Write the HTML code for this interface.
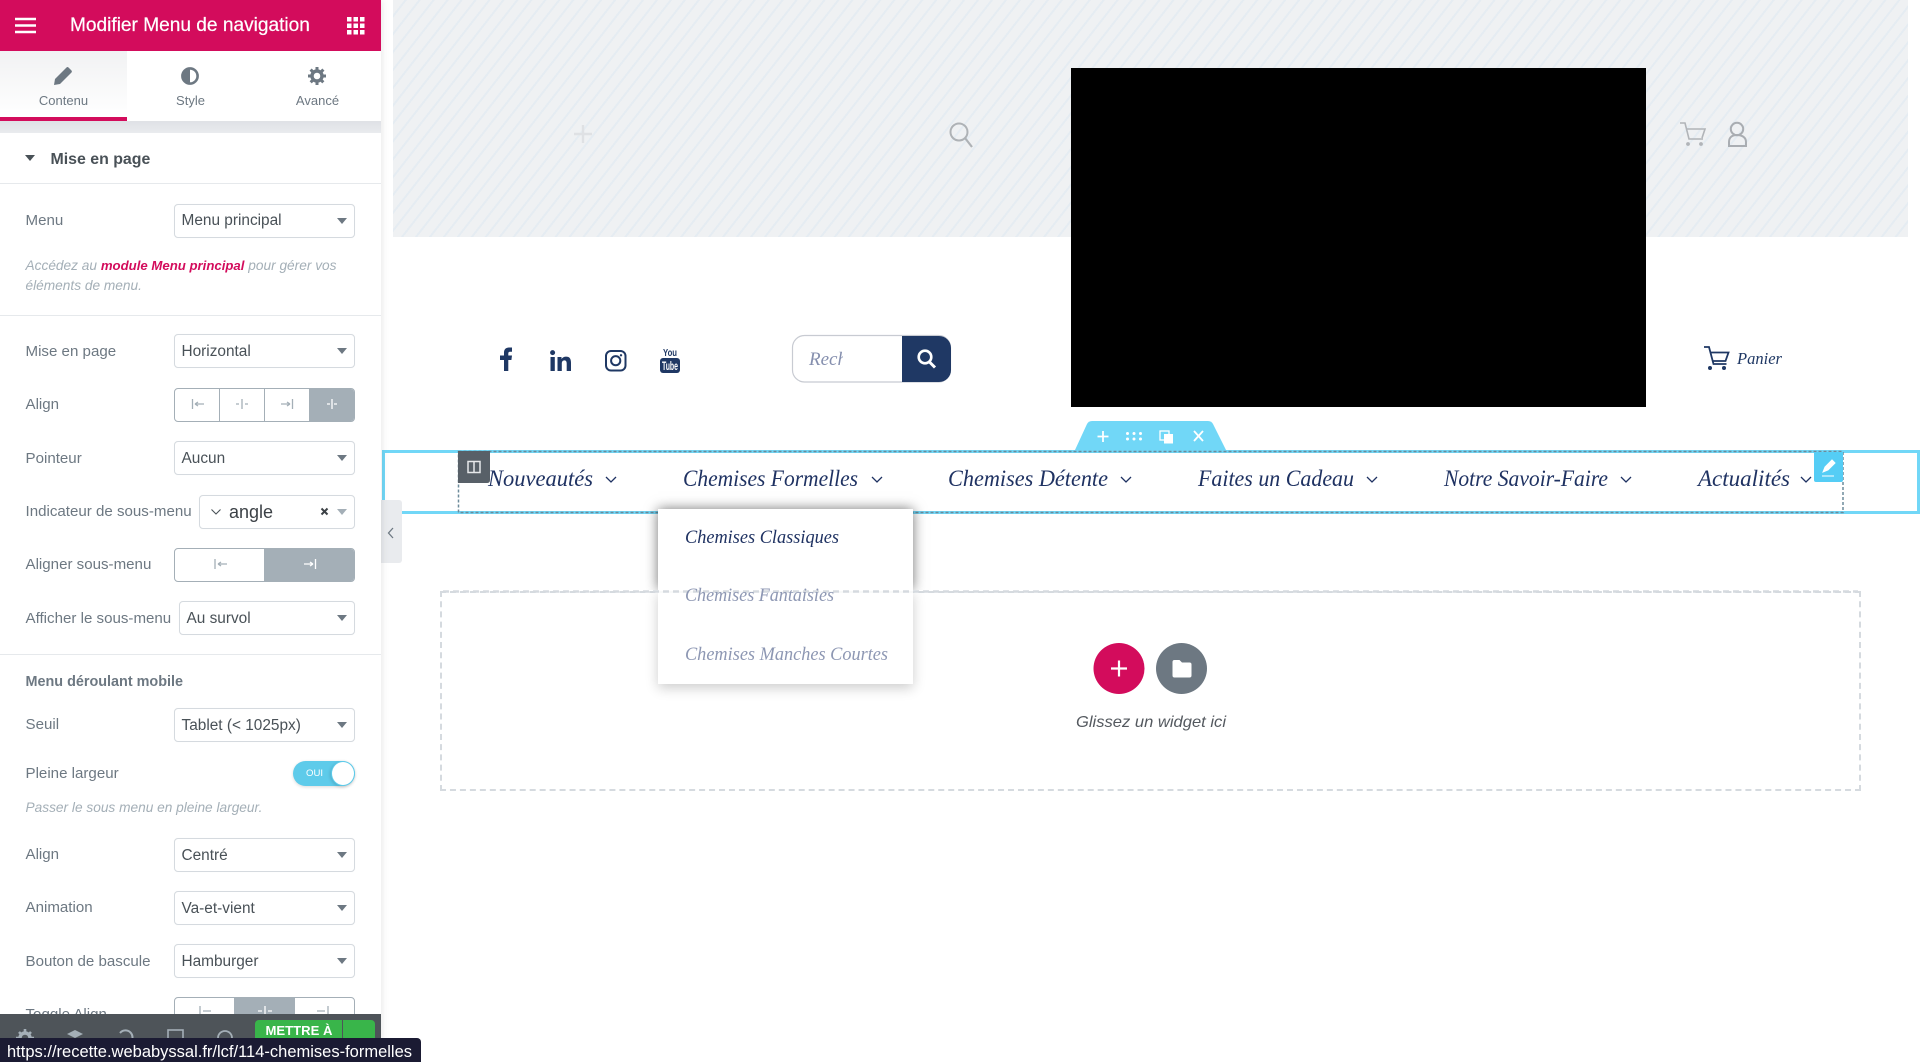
<!DOCTYPE html>
<html lang="fr"><head><meta charset="utf-8"><title>Modifier Menu de navigation</title>
<style>
*{box-sizing:border-box}
html,body{margin:0;padding:0;width:1920px;height:1062px;overflow:hidden;background:#fff;font-family:"Liberation Sans",sans-serif}
.a{position:absolute}
.t{position:absolute;white-space:nowrap;line-height:20px;height:20px}
#panel{position:absolute;left:0;top:0;width:381px;height:1062px;background:#fff;box-shadow:0 0 8px rgba(0,0,0,.12);overflow:hidden;z-index:5}
.lab{font-size:15.1px;color:#6d7882;left:25.5px;margin-top:1px}
.sel{position:absolute;left:174px;width:181px;height:34px;border:1px solid #d5dadf;border-radius:4px;background:#fff;box-shadow:0 0 1px rgba(0,0,0,.05)}
.sel span{position:absolute;left:6.5px;top:6.5px;font-size:15.4px;line-height:20px;color:#495157;white-space:nowrap}
.sel i{position:absolute;right:7px;top:13px;width:0;height:0;border-left:5px solid transparent;border-right:5px solid transparent;border-top:6px solid #6d7882}
.grp{position:absolute;left:174px;width:181px;height:34px;border:1.5px solid #a4afb7;border-radius:4px;background:#fff;overflow:hidden}
.grp b{position:absolute;top:0;bottom:0;background:#a4afb7}
.grp u{position:absolute;top:0;bottom:0;width:1px;background:#a4afb7}
.sep{position:absolute;left:0;width:381px;height:1px;background:#e6e9ec}
svg{display:block}
</style></head><body>

<!-- Preview -->
<div class="a" style="left:393px;top:0;width:1515px;height:237px;background-color:#eff1f3;background-image:repeating-linear-gradient(128deg,#eff1f3 0,#eff1f3 9px,#e5ecf2 9px,#e5ecf2 11px)"></div>
<div class="a" style="left:1071px;top:68px;width:575px;height:339px;background:#000"></div>

<svg class="a" style="left:0;top:0" width="1920" height="1062" viewBox="0 0 1920 1062">
  <!-- placeholder icons -->
  <path d="M583 125v18M574 134h18" stroke="#dfe1e4" stroke-width="2.4" fill="none"/>
  <circle cx="959" cy="132" r="8.5" fill="none" stroke="#aeb2b6" stroke-width="2"/>
  <path d="M965 138l7 9" stroke="#aeb2b6" stroke-width="2.2"/>
  <path d="M1680 123h5l4 16h14M1687 129h18l-3 9" fill="none" stroke="#b1b4b8" stroke-width="1.6"/>
  <circle cx="1688" cy="144" r="1.9" fill="#b1b4b8"/><circle cx="1701" cy="144" r="1.9" fill="#b1b4b8"/>
  <circle cx="1737" cy="129" r="6.2" fill="none" stroke="#a9adb2" stroke-width="2"/>
  <path d="M1729 146v-4c0-5 3.500-7 8-7s9 2 9 7v4z" fill="none" stroke="#a9adb2" stroke-width="2"/>

  <!-- social -->
  <path d="M504 371v-11h-4v-4.500h4v-3c0-3.200 2-5 5-5h3v4.300h-2c-1.300 0-1.700.7-1.700 1.800v1.900h3.700l-.6 4.500h-3.100v11z" fill="#1f3864"/>
  <g transform="translate(-1 0)">
  <circle cx="553.600" cy="352.600" r="2.500" fill="#1f3864"/>
  <path d="M551.500 357h4.300v14h-4.300zM558.500 357h4v2c1-1.500 2.600-2.400 4.600-2.400 3.600 0 4.900 2.300 4.900 6.200v8.200h-4.300v-7.400c0-1.900-.6-3.200-2.300-3.200-1.900 0-2.600 1.400-2.600 3.300v7.300h-4.300z" fill="#1f3864"/>
  </g>
  <rect x="606" y="351" width="19.500" height="19.500" rx="5" fill="none" stroke="#1f3864" stroke-width="2"/>
  <circle cx="615.700" cy="360.700" r="4.600" fill="none" stroke="#1f3864" stroke-width="2"/>
  <circle cx="621" cy="355.300" r="1.200" fill="#1f3864"/>
  <text x="663" y="356" font-family="Liberation Sans" font-size="10" font-weight="700" fill="#1f3864" textLength="14" lengthAdjust="spacingAndGlyphs">You</text>
  <rect x="660" y="358" width="20" height="15" rx="3" fill="#1f3864"/>
  <text x="662" y="370" font-family="Liberation Sans" font-size="12" font-weight="700" fill="#fff" textLength="16" lengthAdjust="spacingAndGlyphs">Tube</text>

  <!-- search -->
  <rect x="792.500" y="335.500" width="158" height="46.500" rx="12" fill="#fff" stroke="#c8cbd2" stroke-width="1.200"/>
  <path d="M902 336h37a12 12 0 0 1 12 12v22a12 12 0 0 1-12 12h-37z" fill="#1f3864"/>
  <circle cx="925" cy="357" r="6.300" fill="none" stroke="#fff" stroke-width="2.600"/>
  <path d="M929.500 362l5.500 5.500" stroke="#fff" stroke-width="3"/>
  <clipPath id="rc"><rect x="805" y="340" width="38" height="40"/></clipPath>
  <text clip-path="url(#rc)" x="809" y="365" font-family="Liberation Serif" font-style="italic" font-size="19" fill="#858fae">Rechercher</text>

  <!-- panier -->
  <path d="M1704 347h5l4.500 17h13M1710.500 352.500h18l-3 8.500h-13" fill="none" stroke="#1f3864" stroke-width="1.800"/>
  <circle cx="1710" cy="368" r="2" fill="#1f3864"/><circle cx="1724" cy="368" r="2" fill="#1f3864"/>
  <text x="1737" y="364" font-family="Liberation Serif" font-style="italic" font-size="17" fill="#1f3864" textLength="45" lengthAdjust="spacingAndGlyphs">Panier</text>

  <!-- section outline -->
  <rect x="383.500" y="451.500" width="1535" height="61" fill="#fff" stroke="#71d7f7" stroke-width="3"/>
  <!-- toolbar -->
  <path d="M1075 450L1087 424q1.500-3 5-3h116q3.500 0 5 3l13 26z" fill="#71d7f7"/>
  <path d="M1103 431v11M1097.500 436.500h11M1194 431l9 10M1203 431l-9 10" stroke="#fff" stroke-width="1.800" fill="none"/>
  <g fill="#fff"><circle cx="1127.500" cy="433.500" r="1.500"/><circle cx="1134" cy="433.500" r="1.500"/><circle cx="1140.500" cy="433.500" r="1.500"/><circle cx="1127.500" cy="439" r="1.500"/><circle cx="1134" cy="439" r="1.500"/><circle cx="1140.500" cy="439" r="1.500"/></g>
  <rect x="1160" y="431" width="9" height="9" fill="none" stroke="#fff" stroke-width="1.300"/>
  <rect x="1164" y="434" width="9" height="9.500" fill="#fff"/>
  <!-- dashed column -->
  <rect x="458.500" y="451.500" width="1384.500" height="61" fill="none" stroke="#6d8b9b" stroke-width="1.500" stroke-dasharray="3 2"/>

  <!-- nav text -->
  <g font-family="Liberation Serif" font-style="italic" font-size="23" fill="#1f3262">
    <text x="488" y="486" textLength="105" lengthAdjust="spacingAndGlyphs">Nouveautés</text>
    <text x="683" y="486" textLength="175" lengthAdjust="spacingAndGlyphs">Chemises Formelles</text>
    <text x="948" y="486" textLength="160" lengthAdjust="spacingAndGlyphs">Chemises Détente</text>
    <text x="1198" y="486" textLength="156" lengthAdjust="spacingAndGlyphs">Faites un Cadeau</text>
    <text x="1444" y="486" textLength="164" lengthAdjust="spacingAndGlyphs">Notre Savoir-Faire</text>
    <text x="1698" y="486" textLength="92" lengthAdjust="spacingAndGlyphs">Actualités</text>
  </g>
  <g fill="none" stroke="#1f3262" stroke-width="1.300">
    <path d="M606 477l5 5 5-5M872 477l5 5 5-5M1121 477l5 5 5-5M1367 477l5 5 5-5M1621 477l5 5 5-5M1801 477l5 5 5-5"/>
  </g>
  <!-- handle -->
  <path d="M458 451h32v29q0 3-3 3h-29z" fill="#586068"/>
  <rect x="468" y="461.500" width="12" height="11" fill="none" stroke="#e6e8ea" stroke-width="1.500"/>
  <path d="M474 461v12" stroke="#e6e8ea" stroke-width="1.500"/>
  <!-- edit -->
  <path d="M1814 452h29v28q0 2-2 2h-25q-2 0-2-2z" fill="#55cdf5"/>
  <path d="M1823 472l2-5 7-7 3 3-7 7zM1822 476h12" fill="#fff" stroke="#fff" stroke-width="1"/>
</svg>

<!-- Dropzone -->
<div class="a" style="left:440px;top:591px;width:1421px;height:200px;border:2.500px dashed #d5dadf"></div>

<!-- dropdown -->
<div class="a" style="left:658px;top:590px;width:255px;height:94px;background:rgba(255,255,255,.82);box-shadow:0 4px 12px rgba(0,0,0,.2);clip-path:inset(0 -20px -20px -20px)"></div>
<div class="a" style="left:658px;top:509px;width:255px;height:81px;background:#fff;box-shadow:0 0 12px rgba(0,0,0,.55);clip-path:inset(-20px -20px 0 -20px)"></div>
<svg class="a" style="left:0;top:0" width="1920" height="1062" viewBox="0 0 1920 1062">
  <path d="M443 591.500H1858" stroke="#d5dadf" stroke-width="2.500" stroke-dasharray="6 4"/>
  <g font-family="Liberation Serif" font-style="italic" font-size="19">
    <text x="685" y="543" fill="#1f3262" textLength="154" lengthAdjust="spacingAndGlyphs">Chemises Classiques</text>
    <text x="685" y="601" fill="#8d97b3" textLength="149" lengthAdjust="spacingAndGlyphs">Chemises Fantaisies</text>
    <text x="685" y="660" fill="#8d97b3" textLength="203" lengthAdjust="spacingAndGlyphs">Chemises Manches Courtes</text>
  </g>
  <circle cx="1119" cy="668.500" r="25.500" fill="#d30c5c"/>
  <path d="M1119 660.500v16M1111 668.500h16" stroke="#fff" stroke-width="2.200"/>
  <circle cx="1181.500" cy="668.500" r="25.500" fill="#6d7882"/>
  <path d="M1172.500 662q0-2 2-2h5l2.500 2.500h7.500q2 0 2 2v11q0 2-2 2h-15q-2 0-2-2z" fill="#fff"/>
  <text x="1076" y="727" font-family="Liberation Sans" font-style="italic" font-size="16" fill="#54595f" textLength="150" lengthAdjust="spacingAndGlyphs">Glissez un widget ici</text>
</svg>

<!-- collapse tab -->
<div class="a" style="left:381px;top:500px;width:21px;height:63px;background:#e9ebee;border-radius:0 3px 3px 0;z-index:4"></div>
<svg class="a" style="left:385px;top:525px;z-index:4" width="12" height="16"><path d="M8 3L3.500 8 8 13" fill="none" stroke="#6d7882" stroke-width="1.300"/></svg>

<!-- Panel -->
<div id="panel">
  <div class="a" style="left:0;top:0;width:381px;height:51px;background:#d30c5c"></div>
  <svg class="a" style="left:15px;top:17px" width="22" height="17"><path d="M0 2h21M0 8.500h21M0 15h21" stroke="#fff" stroke-width="2.600"/></svg>
  <div class="t" style="left:70px;top:16px;font-size:19.1px;color:#fff;-webkit-text-stroke:.2px #fff">Modifier Menu de navigation</div>
  <svg class="a" style="left:347px;top:17px" width="18" height="18" fill="#fff"><rect x="0" y="0" width="4.500" height="4.500"/><rect x="6.500" y="0" width="4.500" height="4.500"/><rect x="13" y="0" width="4.500" height="4.500"/><rect x="0" y="6.500" width="4.500" height="4.500"/><rect x="6.500" y="6.500" width="4.500" height="4.500"/><rect x="13" y="6.500" width="4.500" height="4.500"/><rect x="0" y="13" width="4.500" height="4.500"/><rect x="6.500" y="13" width="4.500" height="4.500"/><rect x="13" y="13" width="4.500" height="4.500"/></svg>

  <!-- tabs -->
  <div class="a" style="left:0;top:51px;width:127px;height:70px;background:linear-gradient(#f1f2f3,#fff);border-bottom:4px solid #d30c5c"></div>
  <svg class="a" style="left:52px;top:65px" width="22" height="22"><path d="M2 20l1-6L14.500 2.500a1.500 1.500 0 0 1 2 0l3 3a1.500 1.500 0 0 1 0 2L8 19z" fill="#6d7882"/></svg>
  <div class="t" style="left:0;width:127px;text-align:center;top:91px;font-size:13px;color:#6d7882">Contenu</div>
  <svg class="a" style="left:181px;top:67px" width="18" height="18"><circle cx="9" cy="9" r="7.600" fill="#fff" stroke="#6d7882" stroke-width="2.600"/><path d="M9 1.500a7.500 7.500 0 0 0 0 15z" fill="#6d7882"/></svg>
  <div class="t" style="left:127px;width:127px;text-align:center;top:91px;font-size:13px;color:#6d7882">Style</div>
  <svg class="a" style="left:308px;top:67px" width="18" height="18"><circle cx="9" cy="9" r="5" fill="none" stroke="#6d7882" stroke-width="3.400"/><path d="M9 0v18M0 9h18M2.600 2.600l12.800 12.800M15.400 2.600L2.600 15.400" stroke="#6d7882" stroke-width="3" stroke-dasharray="3 12"/></svg>
  <div class="t" style="left:254px;width:127px;text-align:center;top:91px;font-size:13px;color:#6d7882">Avancé</div>
  <div class="a" style="left:0;top:121px;width:381px;height:12px;background:linear-gradient(#dfe1e6,#e9ebee)"></div>

  <!-- section -->
  <div class="a" style="left:25px;top:155px;width:0;height:0;border-left:5px solid transparent;border-right:5px solid transparent;border-top:6px solid #495157"></div>
  <div class="t" style="left:50.5px;top:149.5px;font-size:15.9px;font-weight:700;color:#495157">Mise en page</div>
  <div class="sep" style="top:183px"></div>

  <div class="t lab" style="top:210px">Menu</div>
  <div class="sel" style="top:203.5px"><span>Menu principal</span><i></i></div>
  <div class="t" style="left:25.5px;top:256px;font-size:13.7px;font-style:italic;color:#a4afb7">Accédez au <b style="color:#d30c5c;font-size:13.2px">module Menu principal</b> pour gérer vos</div>
  <div class="t" style="left:25.5px;top:276px;font-size:13.7px;font-style:italic;color:#a4afb7">éléments de menu.</div>
  <div class="sep" style="top:315px"></div>

  <div class="t lab" style="top:341px">Mise en page</div>
  <div class="sel" style="top:334px"><span>Horizontal</span><i></i></div>

  <div class="t lab" style="top:394px">Align</div>
  <div class="grp" style="top:387.5px"><u style="left:44px"></u><u style="left:89px"></u><b style="left:134px;right:0"></b></div>
  <svg class="a" style="left:174px;top:387px" width="181" height="34" fill="none" stroke-width="1.300">
    <g stroke="#a4afb7"><path d="M18.500 12v10M21 17h9M21 17l3-2M21 17l3 2"/><path d="M68 12v10M62 17h3M71 17h3"/><path d="M118.500 12v10M107 17h9M116 17l-3-2M116 17l-3 2"/></g>
    <g stroke="#fff"><path d="M158 12v10M153 17h3M160 17h3"/></g>
  </svg>

  <div class="t lab" style="top:448px">Pointeur</div>
  <div class="sel" style="top:441px"><span>Aucun</span><i></i></div>

  <div class="t lab" style="top:501px">Indicateur de sous-menu</div>
  <div class="sel" style="top:494.5px;left:199px;width:156px"><i style="border-top-color:#a4afb7;top:13px"></i></div>
  <svg class="a" style="left:210px;top:507px" width="12" height="10"><path d="M1.500 2.500l4.500 4.500 4.500-4.500" fill="none" stroke="#495157" stroke-width="1.100"/></svg>
  <div class="t" style="left:229px;top:502px;font-size:18px;color:#3c4146">angle</div>
  <svg class="a" style="left:320px;top:507px" width="10" height="10"><path d="M1.500 1.500l6 6M7.500 1.500l-6 6" stroke="#3c4146" stroke-width="2"/></svg>

  <div class="t lab" style="top:554px">Aligner sous-menu</div>
  <div class="grp" style="top:547.5px"><b style="left:89px;right:0"></b></div>
  <svg class="a" style="left:174px;top:547px" width="181" height="34" fill="none" stroke-width="1.300">
    <path d="M41 12v10M44 17h9M44 17l3-2M44 17l3 2" stroke="#a4afb7"/>
    <path d="M141.500 12v10M130 17h9M139 17l-3-2M139 17l-3 2" stroke="#fff"/>
  </svg>

  <div class="t lab" style="top:608px">Afficher le sous-menu</div>
  <div class="sel" style="top:601px;left:179px;width:176px"><span>Au survol</span><i></i></div>
  <div class="sep" style="top:654px"></div>

  <div class="t" style="left:25.5px;top:671.5px;font-size:14.4px;font-weight:700;color:#6d7882">Menu déroulant mobile</div>

  <div class="t lab" style="top:714px">Seuil</div>
  <div class="sel" style="top:708px"><span>Tablet (&lt; 1025px)</span><i></i></div>

  <div class="t lab" style="top:763px">Pleine largeur</div>
  <div class="a" style="left:293px;top:761px;width:62px;height:25px;border-radius:13px;background:#5ecbea;box-shadow:0 1px 3px rgba(0,0,0,.15)"></div>
  <div class="t" style="left:306px;top:764px;font-size:9.6px;color:#fff">OUI</div>
  <div class="a" style="left:331px;top:761px;width:24px;height:25px;border-radius:50%;background:#fff;border:1px solid #5ecbea;box-shadow:-1px 1px 3px rgba(0,0,0,.15)"></div>
  <div class="t" style="left:25.5px;top:798px;font-size:13.7px;font-style:italic;color:#a4afb7">Passer le sous menu en pleine largeur.</div>

  <div class="t lab" style="top:844px">Align</div>
  <div class="sel" style="top:838px"><span>Centré</span><i></i></div>
  <div class="t lab" style="top:897px">Animation</div>
  <div class="sel" style="top:891px"><span>Va-et-vient</span><i></i></div>
  <div class="t lab" style="top:951px">Bouton de bascule</div>
  <div class="sel" style="top:944px"><span>Hamburger</span><i></i></div>

  <div class="t lab" style="top:1004px">Toggle Align</div>
  <div class="grp" style="top:997px"><b style="left:59px;width:61px"></b></div>
  <svg class="a" style="left:174px;top:997px" width="181" height="34" fill="none" stroke-width="1.300">
    <path d="M26 9v10M29 14h8" stroke="#a4afb7"/><path d="M91 9v10M84 14h4M94 14h4" stroke="#fff"/><path d="M154 9v10M143 14h8" stroke="#a4afb7"/>
  </svg>

  <!-- footer -->
  <div class="a" style="left:0;top:1014px;width:381px;height:48px;background:#4e5459"></div>
  <svg class="a" style="left:0;top:1014px" width="381" height="48" fill="#a4afb7">
    <circle cx="25" cy="24" r="5" fill="none" stroke="#a4afb7" stroke-width="3.400"/>
    <path d="M25 15v18M16 24h18M19 18l12 12M31 18L19 30" stroke="#a4afb7" stroke-width="2.600" stroke-dasharray="3 12"/>
    <path d="M67 20l8-4 8 4-8 4z"/>
    <path d="M120 19a7 7 0 1 1-1 7" fill="none" stroke="#a4afb7" stroke-width="2"/>
    <rect x="168" y="16" width="15" height="12" fill="none" stroke="#a4afb7" stroke-width="1.600"/>
    <circle cx="225" cy="24" r="7" fill="none" stroke="#a4afb7" stroke-width="1.800"/>
  </svg>
  <div class="a" style="left:255px;top:1020px;width:87px;height:30px;background:#39b54a;border-radius:4px 0 0 0"></div>
  <div class="a" style="left:343px;top:1020px;width:32px;height:30px;background:#39b54a;border-radius:0 4px 0 0"></div>
  <div class="t" style="left:265.5px;top:1021px;font-size:13.1px;font-weight:700;color:#fff">METTRE À</div>
</div>

<!-- status tooltip -->
<div class="a" style="left:0;top:1038px;width:421px;height:24px;background:#1b1b33;border-radius:0 4px 0 0;z-index:6"></div>
<div class="t" style="left:7px;top:1042px;font-size:16.5px;color:#fff;z-index:7">https://recette.webabyssal.fr/lcf/114-chemises-formelles</div>

</body></html>
